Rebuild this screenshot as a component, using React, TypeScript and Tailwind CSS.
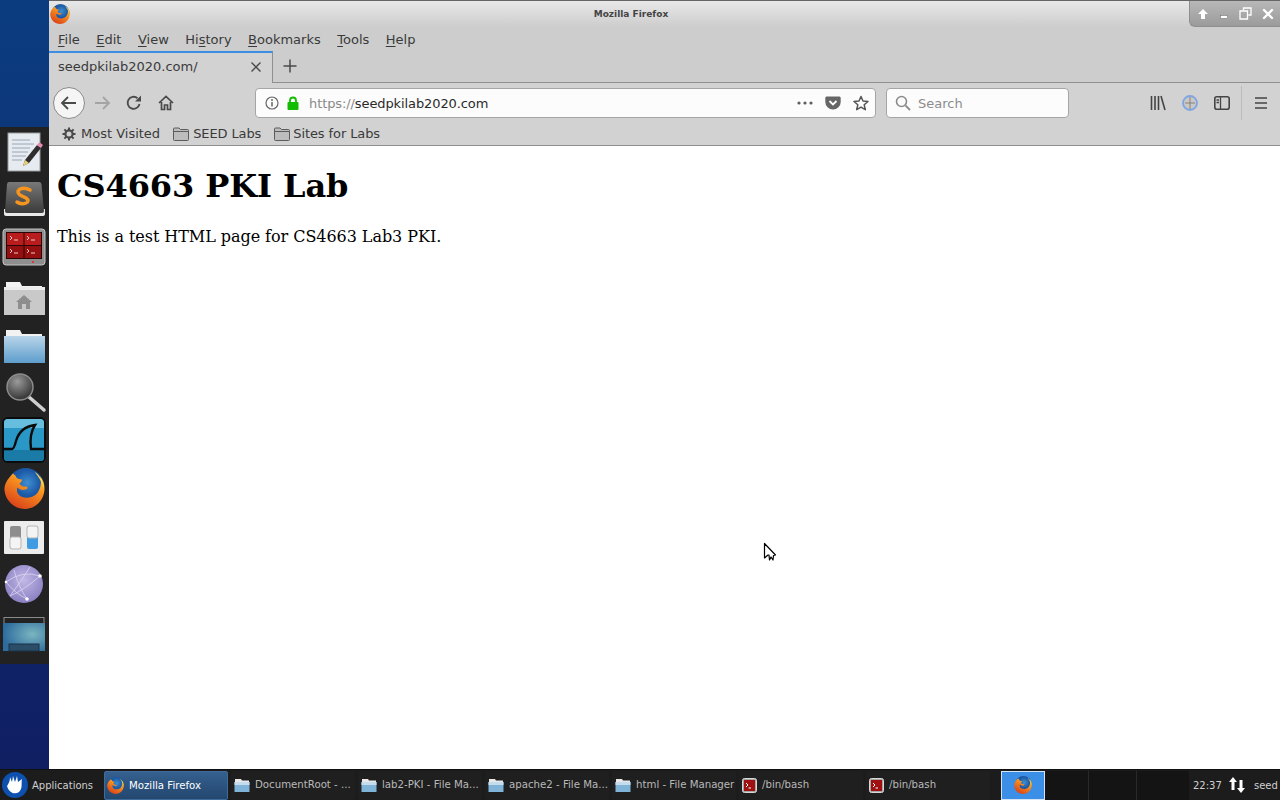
import type { ReactNode } from "react"

const uiFont = "font-['DejaVu_Sans',sans-serif]"

function FoxLogo({ size, id }: { size: number; id: string }) {
  return (
    <svg width={size} height={size} viewBox="0 0 40 40" className="shrink-0">
      <defs>
        <radialGradient id={`${id}-globe`} cx="55%" cy="40%" r="60%">
          <stop offset="0%" stopColor="#3f8fd0" />
          <stop offset="55%" stopColor="#1d5ba8" />
          <stop offset="100%" stopColor="#1a4790" />
        </radialGradient>
        <linearGradient id={`${id}-fox`} x1="0.85" y1="0.1" x2="0.3" y2="1">
          <stop offset="0%" stopColor="#ffcb3a" />
          <stop offset="35%" stopColor="#f78f1e" />
          <stop offset="100%" stopColor="#d9401a" />
        </linearGradient>
      </defs>
      <circle cx="21" cy="18" r="18" fill={`url(#${id}-globe)`} />
      <path
        d="M9 5 C3 11 0 16 0.5 22 C1.5 32 10 40 20 40 C31 40 39.5 31 39.5 20 C39.5 15 38 11 35 8 C37 14 36 20 32 25 C28 29 22 30 17 28 C13 26 12 22 13 19 C15 21 18 22 21 21 C24 20 23 18 21 18 C18 18 16 17 15 15 C17 14 18 12 17 11 C14 11 12 10 11 7 C10 7 9.5 6 9 5 Z"
        fill={`url(#${id}-fox)`}
      />
      <path d="M30 4 C35 7 38.5 13 39 20 C37 14 34 9 30 4 Z" fill="#ffd84f" />
    </svg>
  )
}

function FolderSmall() {
  return (
    <svg width="16" height="14" viewBox="0 0 16 14" className="shrink-0">
      <path d="M0.5 2 Q0.5 1 1.5 1 H6 L7.5 2.5 H14.5 Q15.5 2.5 15.5 3.5 V12.5 Q15.5 13.5 14.5 13.5 H1.5 Q0.5 13.5 0.5 12.5 Z" fill="#bdbdbd" stroke="#5c5c5c" />
      <path d="M1 4.5 H15" stroke="#5c5c5c" />
    </svg>
  )
}

function TaskFolder() {
  return (
    <svg width="16" height="15" viewBox="0 0 16 15" className="shrink-0">
      <path d="M1 1 H7 L8 2.5 H15 V5 H1 Z" fill="#e8e8e8" />
      <rect x="0.5" y="4" width="15" height="10" fill="#7fb3d8" />
      <rect x="0.5" y="4" width="15" height="3" fill="#c4dcec" />
    </svg>
  )
}

function TaskTerminal() {
  return (
    <svg width="15" height="15" viewBox="0 0 15 15" className="shrink-0">
      <rect x="0.5" y="0.5" width="14" height="14" rx="2" fill="#a5a5a5" stroke="#d8d8d8" />
      <rect x="2" y="2" width="11" height="11" fill="#a01010" />
      <path d="M4 5 L6 7 L4 9 M6.5 10 H9" stroke="#ffffff" strokeWidth="1" fill="none" />
    </svg>
  )
}

function TaskItem({ icon, label, active }: { icon: ReactNode; label: string; active?: boolean }) {
  return (
    <div
      className={`flex h-[29px] w-[124px] shrink-0 items-center rounded-[2px] text-[10.2px] ${
        active
          ? "gap-[5px] border border-[#3d6c9c] bg-gradient-to-b from-[#35608f] to-[#23476f] pl-[2px] pt-[1px] text-white"
          : "gap-[5px] bg-[#1f1f1f] pl-[3px] text-[#b9b9b9]"
      }`}
    >
      {icon}
      <span className="whitespace-nowrap">{label}</span>
    </div>
  )
}

function MenuLabel({ before, mark, after }: { before?: string; mark: string; after: string }) {
  return (
    <span>
      {before}
      <span className="underline underline-offset-2">{mark}</span>
      {after}
    </span>
  )
}

function DockIcons() {
  return (
    <div className="flex flex-col pt-[1px]">
      {/* notes */}
      <svg width="48" height="48" viewBox="0 0 48 48">
        <rect x="8" y="5" width="32" height="38" fill="#e6ebf2" stroke="#9a9a9a" />
        <path d="M12 12 H30 M12 16 H34 M12 20 H30 M12 24 H28 M12 28 H26 M12 32 H22" stroke="#9aa4b2" strokeWidth="1" />
        <path d="M23 38 L25 32 L37 17 L41 20 L29 35 Z" fill="#2e2e2e" />
        <path d="M37 17 L39 14.5 Q40 14 43 17 L41 20 Z" fill="#e58ab0" />
        <path d="M23 38 L25 32 L29 35 Z" fill="#e8cf7a" />
      </svg>
      {/* sublime */}
      <svg width="48" height="48" viewBox="0 0 48 48">
        <defs>
          <linearGradient id="subl" x1="0" y1="0" x2="0" y2="1">
            <stop offset="0%" stopColor="#787878" />
            <stop offset="100%" stopColor="#3a3a3a" />
          </linearGradient>
        </defs>
        <path d="M4 33 V38 Q4 40 6 40 H43 Q45 40 45 38 V33 Z" fill="#e8e8e8" />
        <path d="M9 6 H39 Q41 6 41.5 8 L44 35 Q44 37 42 37 H7 Q5 37 5 35 L7 8 Q7.5 6 9 6 Z" fill="url(#subl)" />
        <path d="M30 14 Q25 11 20 13 Q16 16 20 19 L26 22 Q30 25 26 27 Q21 29 17 26" fill="none" stroke="#f7941e" strokeWidth="3.5" strokeLinecap="round" />
      </svg>
      {/* terminal grid */}
      <svg width="48" height="48" viewBox="0 0 48 48">
        <rect x="3" y="5" width="42" height="36" rx="3" fill="#8f8f8f" stroke="#c4c4c4" />
        <rect x="6" y="8" width="36" height="27" fill="#2a0505" />
        <rect x="7" y="9" width="16.5" height="12" fill="#b81c1c" />
        <rect x="24.5" y="9" width="16.5" height="12" fill="#b81c1c" />
        <rect x="7" y="22" width="16.5" height="12" fill="#940f0f" />
        <rect x="24.5" y="22" width="16.5" height="12" fill="#940f0f" />
        <path d="M10 12 L12 14 L10 16 M14 16 H18 M27 12 L29 14 L27 16 M31 16 H35 M10 25 L12 27 L10 29 M14 29 H18 M27 25 L29 27 L27 29 M31 29 H35" stroke="#f0c8c8" strokeWidth="1" fill="none" />
        <circle cx="33" cy="38" r="1" fill="#e82020" />
      </svg>
      {/* home folder */}
      <svg width="48" height="48" viewBox="0 0 48 48">
        <path d="M6 10 H20 L22 14 H42 V20 H6 Z" fill="#f2f2f2" />
        <path d="M4 15 H45 V43 H4 Z" fill="#c9c9c9" />
        <path d="M4 15 H45 V18 H4 Z" fill="#ececec" />
        <path d="M24 23 L32 30 H30 V37 H26 V32 H22 V37 H18 V30 H16 Z" fill="#8e8e8e" />
      </svg>
      {/* folder */}
      <svg width="48" height="48" viewBox="0 0 48 48">
        <defs>
          <linearGradient id="fold" x1="0" y1="0" x2="0" y2="1">
            <stop offset="0%" stopColor="#b9d5ea" />
            <stop offset="100%" stopColor="#5d9dcc" />
          </linearGradient>
        </defs>
        <path d="M6 10 H20 L22 14 H42 V20 H6 Z" fill="#f2f2f2" />
        <path d="M4 16 H45 V43 H4 Z" fill="url(#fold)" />
      </svg>
      {/* search */}
      <svg width="48" height="48" viewBox="0 0 48 48">
        <defs>
          <radialGradient id="lens" cx="40%" cy="30%" r="75%">
            <stop offset="0%" stopColor="#9a9a9a" />
            <stop offset="100%" stopColor="#2c2c2c" />
          </radialGradient>
        </defs>
        <path d="M29 29 L44 42" stroke="#cfcfcf" strokeWidth="3.5" strokeLinecap="round" />
        <circle cx="20" cy="19" r="13" fill="url(#lens)" stroke="#8b8b8b" strokeWidth="1.5" />
      </svg>
      {/* wireshark */}
      <svg width="48" height="48" viewBox="0 0 48 48">
        <rect x="3" y="2" width="42" height="44" rx="5" fill="#2a98c6" stroke="#0b0b0b" strokeWidth="2" />
        <path d="M4 7 Q4 3 8 3 H40 Q44 3 44 7 V12 H4 Z" fill="#67bddd" />
        <path d="M4 34 H44 V42 Q44 45 41 45 H7 Q4 45 4 42 Z" fill="#1a7ba6" />
        <path d="M3 33 H12 Q14 33 16 25 Q20 11 35 9 Q29 18 31 33 H45" fill="none" stroke="#0b0b0b" strokeWidth="2.4" />
      </svg>
      {/* firefox */}
      <div className="flex h-[48px] w-[48px] items-center justify-center">
        <FoxLogo size={41} id="dock" />
      </div>
      {/* settings */}
      <svg width="48" height="48" viewBox="0 0 48 48">
        <rect x="4" y="9" width="40" height="33" rx="1" fill="#ececec" />
        <rect x="10" y="14" width="11" height="23" rx="2" fill="#8d8d8d" />
        <rect x="10" y="25" width="11" height="12" rx="2" fill="#f4f4f4" stroke="#b5b5b5" />
        <rect x="27" y="14" width="11" height="23" rx="2" fill="#3f9ce2" />
        <rect x="27" y="14" width="11" height="12" rx="2" fill="#f4f4f4" stroke="#b5b5b5" />
      </svg>
      {/* globe */}
      <svg width="48" height="48" viewBox="0 0 48 48">
        <defs>
          <radialGradient id="orb" cx="50%" cy="40%" r="60%">
            <stop offset="0%" stopColor="#c2b9e6" />
            <stop offset="100%" stopColor="#8a7fc2" />
          </radialGradient>
        </defs>
        <circle cx="24" cy="24" r="19" fill="url(#orb)" />
        <path d="M6 22 Q22 10 40 16 M10 36 Q24 30 40 16 M14 10 Q18 26 27 39 M30 7 Q22 20 10 36 M6 22 Q16 34 27 39" fill="none" stroke="#dcd7f0" strokeWidth="0.8" />
        <circle cx="40" cy="16" r="1.8" fill="#fff" />
        <circle cx="27" cy="39" r="1.8" fill="#fff" />
        <circle cx="6" cy="22" r="1.3" fill="#fff" />
      </svg>
      {/* desktop */}
      <svg width="48" height="48" viewBox="0 0 48 48">
        <defs>
          <radialGradient id="desk" cx="70%" cy="40%" r="70%">
            <stop offset="0%" stopColor="#7ab5bf" />
            <stop offset="100%" stopColor="#2e6c9e" />
          </radialGradient>
        </defs>
        <rect x="4" y="9.5" width="40" height="6" fill="none" stroke="#8a8a8a" />
        <rect x="3" y="15" width="42" height="28" fill="url(#desk)" />
        <rect x="9" y="36" width="30" height="7" fill="#2b4d68" stroke="#1d3347" />
      </svg>
    </div>
  )
}

function Cursor() {
  return (
    <svg width="14" height="21" viewBox="0 0 14 21" className="absolute left-[763px] top-[542px]">
      <path d="M1.5 1.5 V16 L5 13 L6 13 L6.5 18 L8 15 L10 18 L10.5 13.5 L12.5 13 Z" fill="#fff" stroke="#000" strokeWidth="1.2" strokeLinejoin="round" />
    </svg>
  )
}

export default function App() {
  return (
    <div className={`relative flex h-[800px] w-[1280px] flex-col overflow-hidden bg-white ${uiFont}`}>
      <div className="flex min-h-0 flex-1">
        {/* Dock over the desktop */}
        <div className="flex w-[49px] shrink-0 flex-col bg-gradient-to-b from-[#0b3c80] to-[#101e62]">
          <div className="h-[127px] shrink-0" />
          <div className="h-[537px] shrink-0 bg-[#222222]">
            <DockIcons />
          </div>
        </div>

        {/* Firefox window */}
        <div className="flex min-w-0 flex-1 flex-col">
          <div className="flex h-[27px] shrink-0 items-start border-t border-t-[#666666] bg-gradient-to-b from-[#e8e8e8] to-[#cdcdcd]">
            <div className="flex h-[26px] w-[24px] shrink-0 items-center pb-[1px] pl-[1px]">
              <FoxLogo size={20} id="title" />
            </div>
            <div className="flex h-[26px] flex-1 items-center justify-center pt-[2px] text-[9px] font-bold text-[#444444]">Mozilla Firefox</div>
            <div className="flex h-[26px] w-[91px] shrink-0 items-center gap-[10px] rounded-bl-[6px] border-b border-l border-[#8f8f8f] bg-gradient-to-b from-[#b8b8b8] to-[#9b9b9b] pl-[7px]">
              <svg width="12" height="12" viewBox="0 0 12 12">
                <path d="M6 1 L11 6 H8 V11 H4 V6 H1 Z" fill="#fff" />
              </svg>
              <svg width="10" height="12" viewBox="0 0 10 12">
                <rect x="1.5" y="7.5" width="7" height="3" fill="#fff" stroke="#666" strokeWidth="0.5" />
              </svg>
              <svg width="13" height="13" viewBox="0 0 13 13">
                <path d="M4.5 3 V1 H12 V8 H9.5 M1 4 H8.5 V12 H1 Z" fill="none" stroke="#fff" strokeWidth="1.3" />
              </svg>
              <svg width="12" height="12" viewBox="0 0 12 12">
                <path d="M2 2 L10 10 M10 2 L2 10" stroke="#fff" strokeWidth="2.4" strokeLinecap="round" />
              </svg>
            </div>
          </div>

          <div className="flex h-[24px] shrink-0 items-center gap-[16.5px] bg-[#cdcdcd] pl-[9px] pt-[2px] text-[13px] text-[#3a3a3a]">
            <MenuLabel mark="F" after="ile" />
            <MenuLabel mark="E" after="dit" />
            <MenuLabel mark="V" after="iew" />
            <MenuLabel before="Hi" mark="s" after="tory" />
            <MenuLabel mark="B" after="ookmarks" />
            <MenuLabel mark="T" after="ools" />
            <MenuLabel mark="H" after="elp" />
          </div>

          {/* Tabs */}
          <div className="flex h-[32px] shrink-0 bg-[#cdcdcd]">
            <div className="flex w-[224px] shrink-0 items-center justify-between border-t-2 border-r border-t-[#3d8de0] border-r-[#8f8f8f] bg-[#d2d2d2] pb-[2px] pl-[9px] pr-[10px] text-[13px] text-[#3a3a3a]">
              <span>seedpkilab2020.com/</span>
              <svg width="12" height="12" viewBox="0 0 12 12">
                <path d="M1.5 1.5 L10.5 10.5 M10.5 1.5 L1.5 10.5" stroke="#4a4a4a" strokeWidth="1.4" />
              </svg>
            </div>
            <div className="flex flex-1 items-center border-b border-b-[#8f8f8f] pb-[1px] pl-[9px]">
              <svg width="16" height="16" viewBox="0 0 16 16">
                <path d="M8 1.5 V14.5 M1.5 8 H14.5" stroke="#4a4a4a" strokeWidth="1.5" />
              </svg>
            </div>
          </div>

          {/* Navigation */}
          <div className="flex h-[40px] shrink-0 items-center bg-[#d2d2d2] pl-[4px]">
            <div className="flex h-[32px] w-[32px] shrink-0 items-center justify-center rounded-full border border-[#8a8a8a] bg-[#f5f5f5]">
              <svg width="18" height="16" viewBox="0 0 18 16">
                <path d="M8 2 L2 8 L8 14 M2 8 H16" fill="none" stroke="#4a4a4a" strokeWidth="1.8" />
              </svg>
            </div>
            <svg width="18" height="16" viewBox="0 0 18 16" className="ml-[8px] shrink-0">
              <path d="M10 2 L16 8 L10 14 M16 8 H2" fill="none" stroke="#a4a4a4" strokeWidth="1.8" />
            </svg>
            <svg width="16" height="16" viewBox="0 0 16 16" className="ml-[15px] shrink-0">
              <path d="M13.5 9 A6 6 0 1 1 11.5 3.2" fill="none" stroke="#4a4a4a" strokeWidth="1.8" />
              <path d="M15 0.5 V6.5 H9 Z" fill="#4a4a4a" />
            </svg>
            <svg width="16" height="16" viewBox="0 0 16 16" className="ml-[16px] shrink-0">
              <path d="M1 8 L8 1.5 L15 8 M3.5 7 V14.5 H6.5 V10 H9.5 V14.5 H12.5 V7" fill="none" stroke="#4a4a4a" strokeWidth="1.7" />
            </svg>

            <div className="ml-[81px] flex h-[30px] w-[621px] shrink-0 items-center rounded-[4px] border border-[#a5a5a5] bg-[#fcfcfc] pl-[9px] pr-[6px] text-[13px]">
              <svg width="14" height="14" viewBox="0 0 14 14" className="shrink-0">
                <circle cx="7" cy="7" r="6" fill="none" stroke="#666" strokeWidth="1.2" />
                <path d="M7 6 V10.5" stroke="#666" strokeWidth="1.5" />
                <circle cx="7" cy="4" r="1" fill="#666" />
              </svg>
              <svg width="14" height="14" viewBox="0 0 14 14" className="ml-[7px] shrink-0">
                <path d="M4 6.5 V4.5 A3 3 0 0 1 10 4.5 V6.5" fill="none" stroke="#12bc00" strokeWidth="1.8" />
                <rect x="1.5" y="6" width="11" height="8" rx="1" fill="#12bc00" />
              </svg>
              <span className="ml-[9px] flex-1 whitespace-nowrap pt-[1px] tracking-[-0.1px] text-[#2a2a2a]">
                <span className="text-[#8a8a8a]">https://</span>seedpkilab2020.com
              </span>
              <svg width="16" height="4" viewBox="0 0 16 4" className="shrink-0">
                <circle cx="2" cy="2" r="1.6" fill="#5e5e5e" />
                <circle cx="8" cy="2" r="1.6" fill="#5e5e5e" />
                <circle cx="14" cy="2" r="1.6" fill="#5e5e5e" />
              </svg>
              <svg width="16" height="14" viewBox="0 0 16 14" className="ml-[12px] shrink-0">
                <path d="M1.5 0.5 H14.5 Q15.7 0.5 15.7 2 V6 A7.7 7.5 0 0 1 0.3 6 V2 Q0.3 0.5 1.5 0.5 Z" fill="#666" />
                <path d="M4.5 5 L8 8.5 L11.5 5" fill="none" stroke="#fff" strokeWidth="1.8" />
              </svg>
              <svg width="16" height="16" viewBox="0 0 16 16" className="ml-[12px] shrink-0">
                <path d="M8 1.5 L10 6 L15 6.5 L11.2 9.8 L12.3 14.7 L8 12.1 L3.7 14.7 L4.8 9.8 L1 6.5 L6 6 Z" fill="none" stroke="#555" strokeWidth="1.5" strokeLinejoin="round" />
              </svg>
            </div>

            <div className="ml-[10px] flex h-[30px] w-[183px] shrink-0 items-center rounded-[4px] border border-[#a5a5a5] bg-[#fcfcfc] pl-[8px] text-[13px] text-[#8c8c8c]">
              <svg width="16" height="16" viewBox="0 0 16 16" className="shrink-0">
                <circle cx="6.5" cy="6.5" r="5" fill="none" stroke="#8c8c8c" strokeWidth="1.6" />
                <path d="M10.5 10.5 L15 15" stroke="#8c8c8c" strokeWidth="1.8" />
              </svg>
              <span className="ml-[7px] pt-[1px]">Search</span>
            </div>

            <svg width="16" height="16" viewBox="0 0 16 16" className="ml-[81px] shrink-0">
              <path d="M1.5 1 V15 M5 1 V15 M8.5 1 V15 M11 1 L15 15" fill="none" stroke="#444" strokeWidth="1.6" />
            </svg>
            <svg width="16" height="16" viewBox="0 0 16 16" className="ml-[16px] shrink-0">
              <circle cx="8" cy="8" r="7" fill="#c9c9c9" stroke="#7fa6e0" strokeWidth="1.8" />
              <path d="M8 2 V14 M3 8 H13" stroke="#8a8078" strokeWidth="1" />
            </svg>
            <svg width="16" height="14" viewBox="0 0 16 14" className="ml-[16px] shrink-0">
              <rect x="0.8" y="0.8" width="14.4" height="12.4" rx="2" fill="none" stroke="#444" strokeWidth="1.6" />
              <path d="M6.5 1 V13 M2.5 4 H5 M2.5 6.5 H5" stroke="#444" strokeWidth="1.3" />
            </svg>
            <div className="ml-[11px] h-[34px] w-px shrink-0 bg-[#bcbcbc]" />
            <svg width="14" height="12" viewBox="0 0 14 12" className="ml-[12px] shrink-0">
              <path d="M1 1 H13 M1 6 H13 M1 11 H13" stroke="#444" strokeWidth="1.7" />
            </svg>
          </div>

          {/* Bookmarks */}
          <div className="flex h-[23px] shrink-0 items-center border-b border-b-[#8f8f8f] bg-[#d2d2d2] pl-[13px] text-[13px] text-[#3a3a3a]">
            <svg width="14" height="14" viewBox="0 0 14 14" className="shrink-0">
              <circle cx="7" cy="7" r="3.6" fill="none" stroke="#4a4a4a" strokeWidth="2.2" />
              <path d="M7 0.5 V3 M7 11 V13.5 M0.5 7 H3 M11 7 H13.5 M2.4 2.4 L4.2 4.2 M9.8 9.8 L11.6 11.6 M11.6 2.4 L9.8 4.2 M4.2 9.8 L2.4 11.6" stroke="#4a4a4a" strokeWidth="2" />
            </svg>
            <span className="ml-[5px]">Most Visited</span>
            <span className="ml-[13px]">
              <FolderSmall />
            </span>
            <span className="ml-[4px] tracking-[-0.1px]">SEED Labs</span>
            <span className="ml-[13px]">
              <FolderSmall />
            </span>
            <span className="ml-[3px] tracking-[-0.1px]">Sites for Labs</span>
          </div>

          {/* Page */}
          <main className="min-h-0 flex-1 bg-white p-[8px] font-['DejaVu_Serif',serif] text-black">
            <h1 className="mb-[22px] mt-[13px] text-[32px] font-bold leading-[38px] tracking-[-0.07px]">CS4663 PKI Lab</h1>
            <p className="text-[16px] leading-[19px] tracking-[-0.05px]">This is a test HTML page for CS4663 Lab3 PKI.</p>
          </main>
        </div>
      </div>

      {/* Panel */}
      <div className="flex h-[31px] shrink-0 items-center border-t border-t-[#111111] bg-[#1c1c1c]">
        <svg width="26" height="26" viewBox="0 0 26 26" className="ml-[2px] shrink-0">
          <circle cx="13" cy="13" r="13" fill="#0d50ad" />
          <path d="M5 14 C8 10 8 6 8 5 L10 10 L11 4 L13 10 L15 4 L16 10 L20 7 C19 12 21 16 17 20 C13 23 7 21 5 14 Z" fill="#ffffff" />
        </svg>
        <span className="ml-[4px] w-[72px] shrink-0 text-[10px] text-[#d0d0d0]">Applications</span>
        <div className="flex shrink-0 items-center gap-[3px]">
          <TaskItem active icon={<FoxLogo size={17} id="task" />} label="Mozilla Firefox" />
          <TaskItem icon={<TaskFolder />} label="DocumentRoot - ..." />
          <TaskItem icon={<TaskFolder />} label="lab2-PKI - File Ma..." />
          <TaskItem icon={<TaskFolder />} label="apache2 - File Ma..." />
          <TaskItem icon={<TaskFolder />} label="html - File Manager" />
          <TaskItem icon={<TaskTerminal />} label="/bin/bash" />
          <TaskItem icon={<TaskTerminal />} label="/bin/bash" />
        </div>
        <div className="ml-[11px] flex h-[29px] w-[44px] shrink-0 items-center justify-center border border-[#d5e3f2] bg-[#3b8fe6]">
          <FoxLogo size={18} id="pager" />
        </div>
        <div className="h-[29px] w-[44px] shrink-0 border-r border-r-[#2a2a2a] bg-[#141414]" />
        <div className="h-[29px] w-[48px] shrink-0 border-r border-r-[#2a2a2a] bg-[#141414]" />
        <div className="h-[29px] w-[52px] shrink-0 bg-[#141414]" />
        <span className="ml-[4px] w-[27px] shrink-0 text-[10px] text-[#d0d0d0]">22:37</span>
        <svg width="18" height="18" viewBox="0 0 18 18" className="ml-[8px] shrink-0">
          <path d="M5 1 L9 6 H6.5 V14 H3.5 V6 H1 Z M13 17 L9 12 H11.5 V4 H14.5 V12 H17 Z" fill="#fff" />
        </svg>
        <span className="ml-[8px] shrink-0 text-[10px] text-[#d0d0d0]">seed</span>
      </div>

      <Cursor />
    </div>
  )
}
